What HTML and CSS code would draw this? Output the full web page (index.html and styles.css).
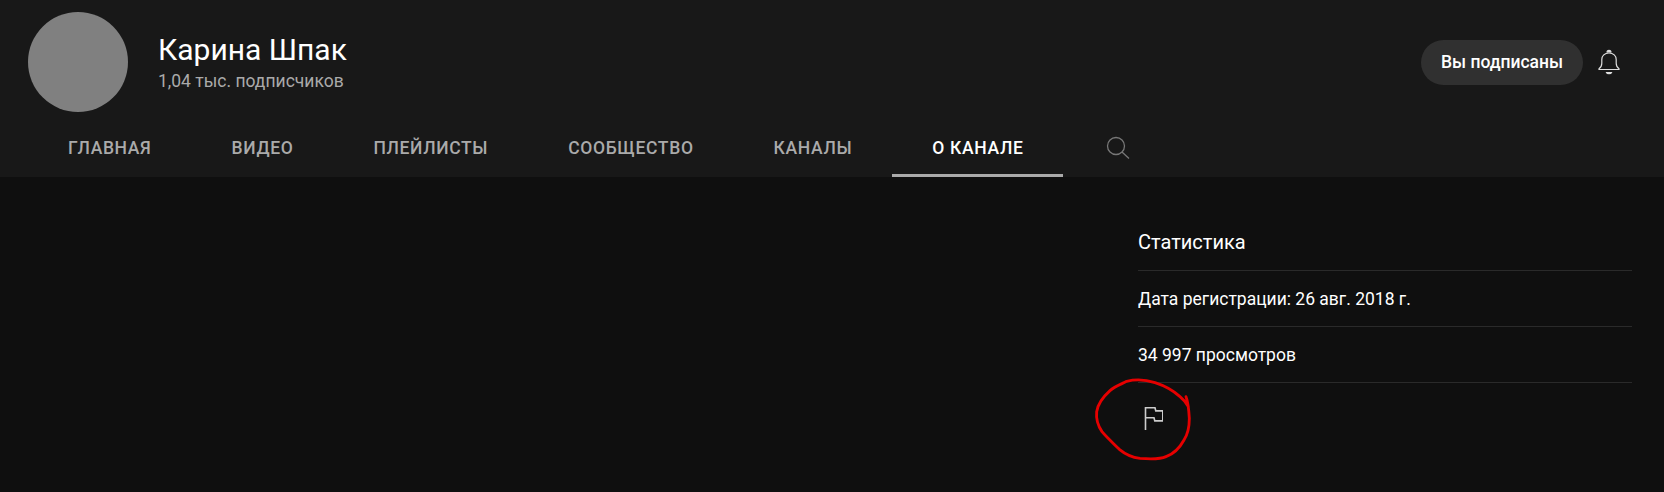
FILE: index.html
```html
<!DOCTYPE html>
<html>
<head>
    <meta charset="UTF-8">
    <title>Карина Шпак</title>
    <link rel="stylesheet" href="styles.css">
</head>
<body>

<header class="head">
    <div class="channel">
        <div class="avatar"></div>
        <div class="names">
            <div class="name">Карина Шпак</div>
            <div class="subs">1,04 тыс. подписчиков</div>
        </div>
        <button class="sub_btn">Вы подписаны</button>
        <svg class="bell" width="22" height="27" viewBox="0 0 22 27" fill="none" stroke="#ddd" stroke-width="1.2">
            <path d="M1 20.5h20v-.8c-2-1.4-2.8-3-2.8-5.5v-3.7c0-3.700-2.800-6.500-7.200-6.500s-7.200 2.800-7.200 6.500v3.700c0 2.500-.8 4.100-2.800 5.500z"/>
            <path d="M9 3.500c0-1.300 1-2.200 2-2.200s2 .9 2 2.200" fill="#ddd"/>
            <path d="M8.500 23.500h5c-.5 1.500-4.500 1.500-5 0z" fill="#ddd"/>
        </svg>
    </div>
    <nav class="tabs">
        <a class="tab">Главная</a>
        <a class="tab">Видео</a>
        <a class="tab">Плейлисты</a>
        <a class="tab">Сообщество</a>
        <a class="tab">Каналы</a>
        <a class="tab active">О канале</a>
        <svg class="search" width="24" height="24" viewBox="0 0 24 24" fill="none" stroke="#777" stroke-width="1.300">
            <circle cx="10" cy="10" r="8.500"/>
            <path d="M16 16l7 6.500"/>
        </svg>
    </nav>
</header>

<main class="content">
    <section class="stats">
        <div class="row title">Статистика</div>
        <div class="row">Дата регистрации: 26 авг. 2018 г.</div>
        <div class="row">34 997 просмотров</div>
        <svg class="flag" width="24" height="26" viewBox="0 0 24 26" fill="none" stroke="#ccc" stroke-width="1.600">
            <path d="M6.500 25V2.700h9.500l.8 3.200h7v10h-8l-.8-3.200H6.500"/>
        </svg>
    </section>
</main>

<!-- red pen mark on top of the screenshot -->
<svg class="pen" width="130" height="110" viewBox="0 0 390 330" fill="none" stroke="#e60000" stroke-width="8.500" stroke-linecap="round" stroke-linejoin="round">
    <path d="M318 110C324 125 326 140 328 175C328 200 322 225 312 240C300 262 280 282 258 290C240 298 205 297 180 295C155 292 130 278 118 268C100 250 80 232 66 215C52 195 48 175 50 155C54 130 70 110 90 92C105 78 125 72 140 64C165 58 200 60 225 68C250 76 280 92 300 110C312 120 320 130 325 140"/>
</svg>

</body>
</html>
```

FILE: styles.css
```css
body{
    margin: 0;
    height: 492px;
    background: #0f0f0f;
    color: #fff;
    font-family: Roboto, "Liberation Sans", sans-serif;
    overflow: hidden;
    position: relative;
}

.head{
    background: #181818;
    height: 177px;
}
.channel{
    display: flex;
    align-items: center;
    height: 100px;
    padding: 12px 34px 0 28px;
}
.avatar{
    width: 100px;
    height: 100px;
    border-radius: 50%;
    background: #808080;
}
.names{
    margin-left: 30px;
    flex: 1;
}
.name{
    font-size: 30px;
    line-height: 32px;
    margin-top: 1px;
}
.subs{
    font-size: 17.5px;
    line-height: 20px;
    margin-top: 5px;
    color: #aaa;
}
.sub_btn{
    width: 162px;
    height: 45px;
    margin-top: 0;
    border: 0;
    border-radius: 23px;
    background: #303030;
    color: #fff;
    font-family: inherit;
    font-size: 17.5px;
    font-weight: 500;
}
.bell{
    margin: 1px 10px 0 15px;
}

.tabs{
    display: flex;
    align-items: center;
    height: 55px;
    margin-top: 10px;
    padding-left: 28px;
}
.tab{
    display: block;
    height: 55px;
    box-sizing: border-box;
    padding: 0 40px;
    line-height: 52px;
    font-size: 17.5px;
    letter-spacing: .66px;
    font-weight: 500;
    text-transform: uppercase;
    color: #aaa;
}
.tab.active{
    color: #fff;
    border-bottom: 3px solid #aaa;
}
.search{
    margin: -4px 0 0 43px;
}

.content{
    display: flex;
    justify-content: flex-end;
    padding-right: 32px;
}
.stats{
    width: 494px;
}
.row{
    height: 56px;
    box-sizing: border-box;
    border-bottom: 1px solid #2a2a2a;
    font-size: 17.5px;
    line-height: 57px;
}
.row.title{
    height: 94px;
    padding-top: 37px;
    font-size: 20px;
}
.flag{
    display: block;
    margin: 22px 0 0 1px;
}

.pen{
    position: absolute;
    left: 1080px;
    top: 360px;
}
```
